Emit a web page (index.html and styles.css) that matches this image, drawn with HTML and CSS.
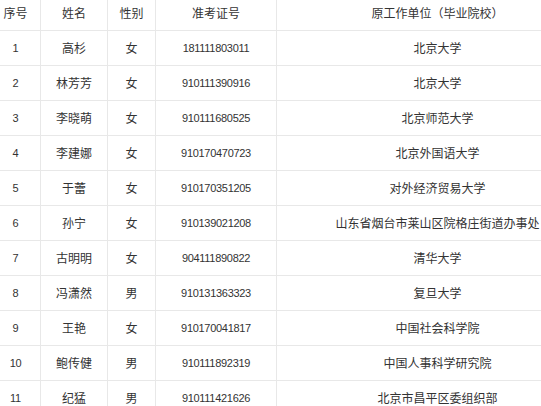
FILE: index.html
```html
<!DOCTYPE html>
<html lang="zh-CN">
<head>
<meta charset="utf-8">
<link rel="stylesheet" href="styles.css">
</head>
<body>
<div class="wrap">
<table class="list">
<colgroup>
<col class="c-no"><col class="c-name"><col class="c-sex"><col class="c-id"><col class="c-unit">
</colgroup>
<tr class="head"><td>序号</td><td>姓名</td><td>性别</td><td>准考证号</td><td>原工作单位（毕业院校）</td></tr>
<tr><td class="num">1</td><td>高杉</td><td>女</td><td class="num">181111803011</td><td>北京大学</td></tr>
<tr><td class="num">2</td><td>林芳芳</td><td>女</td><td class="num">910111390916</td><td>北京大学</td></tr>
<tr><td class="num">3</td><td>李晓萌</td><td>女</td><td class="num">910111680525</td><td>北京师范大学</td></tr>
<tr><td class="num">4</td><td>李建娜</td><td>女</td><td class="num">910170470723</td><td>北京外国语大学</td></tr>
<tr><td class="num">5</td><td>于蕾</td><td>女</td><td class="num">910170351205</td><td>对外经济贸易大学</td></tr>
<tr><td class="num">6</td><td>孙宁</td><td>女</td><td class="num">910139021208</td><td>山东省烟台市莱山区院格庄街道办事处</td></tr>
<tr><td class="num">7</td><td>古明明</td><td>女</td><td class="num">904111890822</td><td>清华大学</td></tr>
<tr><td class="num">8</td><td>冯潇然</td><td>男</td><td class="num">910131363323</td><td>复旦大学</td></tr>
<tr><td class="num">9</td><td>王艳</td><td>女</td><td class="num">910170041817</td><td>中国社会科学院</td></tr>
<tr><td class="num">10</td><td>鲍传健</td><td>男</td><td class="num">910111892319</td><td>中国人事科学研究院</td></tr>
<tr><td class="num">11</td><td>纪猛</td><td>男</td><td class="num">910111421626</td><td>北京市昌平区委组织部</td></tr>
</table>
</div>
</body>
</html>
```
FILE: styles.css
```css
html, body {
  margin: 0;
  padding: 0;
  background: #fff;
  overflow: hidden;
}
.wrap {
  width: 541px;
  height: 406px;
  overflow: hidden;
}
.list {
  border-collapse: collapse;
  margin: -5px 0 0 -10px;
  table-layout: fixed;
  width: 608px;
  font-family: "Noto Sans CJK SC", "Liberation Sans", sans-serif;
  font-size: 12px;
  color: #333;
}
.c-no { width: 50px; }
.c-name { width: 67px; }
.c-sex { width: 48px; }
.c-id { width: 121px; }
.c-unit { width: 322px; }
.list td {
  height: 34px;
  padding: 0;
  border: 1px solid #e8e8e8;
  text-align: center;
  vertical-align: middle;
  white-space: nowrap;
  line-height: 14px;
}
.list td.num {
  font-family: "Liberation Sans", sans-serif;
  font-size: 11px;
  letter-spacing: -0.3px;
}
```
